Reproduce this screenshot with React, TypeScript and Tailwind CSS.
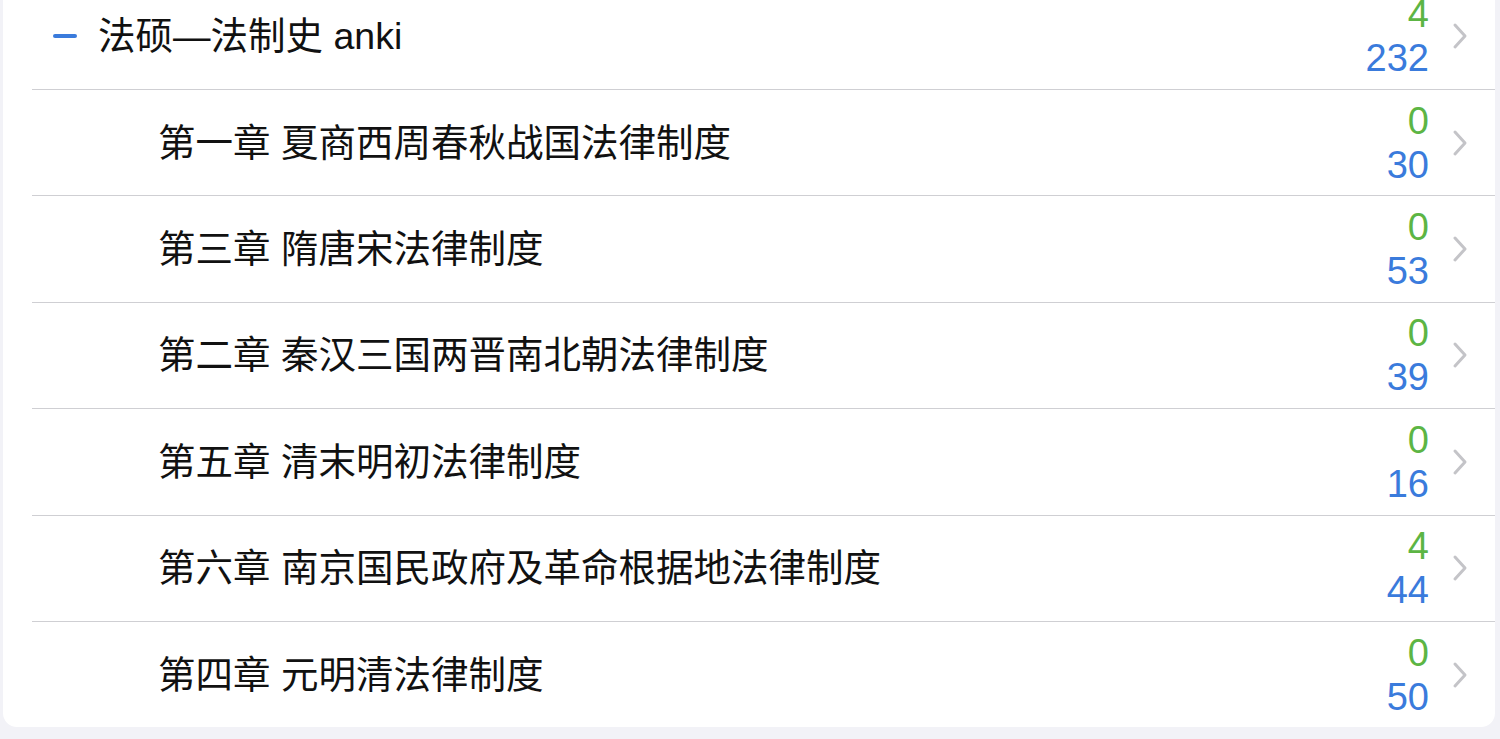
import React from "react";

const decks = [
  { name: "第一章 夏商西周春秋战国法律制度", due: 0, total: 30 },
  { name: "第三章 隋唐宋法律制度", due: 0, total: 53 },
  { name: "第二章 秦汉三国两晋南北朝法律制度", due: 0, total: 39 },
  { name: "第五章 清末明初法律制度", due: 0, total: 16 },
  { name: "第六章 南京国民政府及革命根据地法律制度", due: 4, total: 44 },
  { name: "第四章 元明清法律制度", due: 0, total: 50 },
];

const font = { fontFamily: '"Liberation Sans", "Noto Sans CJK SC", sans-serif' };

function Chevron() {
  return (
    <svg width="18" height="28" viewBox="0 0 18 28" className="shrink-0">
      <path d="M4 3 L14 14 L4 25" fill="none" stroke="#c4c4c8" strokeWidth="3" strokeLinecap="round" strokeLinejoin="round" />
    </svg>
  );
}

function Counts({ due, total }: { due: number; total: number }) {
  return (
    <div className="flex flex-col items-end text-[38px] leading-[44px]">
      <span className="text-[#5cb544]">{due}</span>
      <span className="text-[#3a7bdc]">{total}</span>
    </div>
  );
}

export default function App() {
  return (
    <div className="h-[739px] w-[1500px] overflow-hidden bg-[#f2f2f7]" style={font}>
      <div className="ml-[3px] mr-[5px] -mt-[17px] rounded-b-[14px] bg-white">
        {/* parent deck */}
        <div className="flex h-[106px] items-center pl-[50px] pr-[26px]">
          <div className="h-[4px] w-[24px] rounded-full bg-[#3a7bdc]" />
          <div className="ml-[21px] flex-1 text-[37.5px] text-[#111]">法硕—法制史 anki</div>
          <Counts due={4} total={232} />
          <div className="ml-[22px]">
            <Chevron />
          </div>
        </div>

        {decks.map((d) => (
          <div key={d.name} className="ml-[29px] border-t border-[#cfcfd3]">
            <div className="flex h-[105.4px] items-center pl-[126px] pr-[26px]">
              <div className="flex-1 text-[37.5px] text-[#111]">{d.name}</div>
              <Counts due={d.due} total={d.total} />
              <div className="ml-[22px]">
                <Chevron />
              </div>
            </div>
          </div>
        ))}
      </div>
    </div>
  );
}
